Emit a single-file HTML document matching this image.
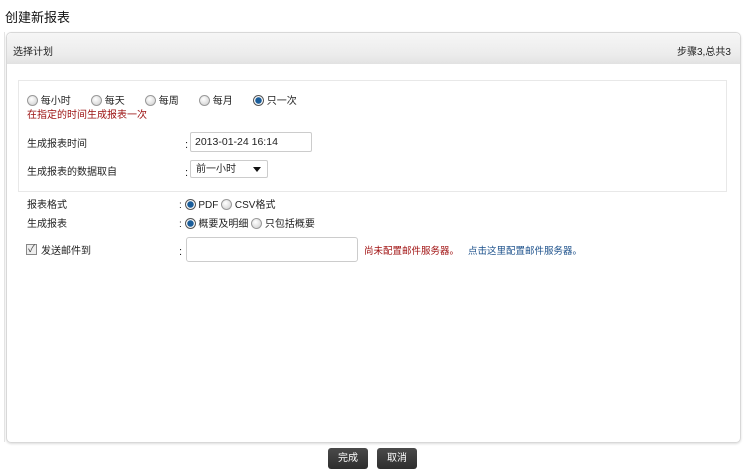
<!DOCTYPE html>
<html><head><meta charset="utf-8"><style>
*{margin:0;padding:0;box-sizing:border-box}
body{width:746px;height:475px;background:#fff;font-family:"Liberation Sans","Noto Sans CJK SC",sans-serif;font-size:11px;color:#222;position:relative;overflow:hidden}
.a{position:absolute;white-space:nowrap;line-height:12px}
.title{left:5px;top:11px;font-size:13px;color:#111;line-height:14px}
.panel{left:6px;top:32px;width:735px;height:411px;border:1px solid #d8d8d8;border-radius:5px;box-shadow:0 1px 2px #ddd}
.hdr{left:7px;top:33px;width:733px;height:31px;background:linear-gradient(#f6f6f6,#ececec 70%,#e2e2e2);border-radius:5px 5px 0 0}
.inner{left:18px;top:80px;width:709px;height:112px;border:1px solid #e8e8e8}
.rad{display:inline-block;width:11px;height:11px;border-radius:50%;border:1px solid #999;background:radial-gradient(circle at 40% 35%,#fff,#ccc);vertical-align:-2px}
.rad.on{background:radial-gradient(circle,#1a5d9a 0 3px,#fff 3.5px,#ddd);border-color:#555}
.inp{border:1px solid #ccc;border-radius:2px;background:#fff}
.btn{top:448px;height:21px;width:40px;background:linear-gradient(#4a4a4a,#2e2e2e);border-radius:3px;color:#fff;text-align:center;line-height:21px;font-size:10px}
</style></head><body>
<div class="a title">创建新报表</div>
<div class="a" style="left:4px;top:32px;width:1px;height:410px;background:#e4e4e4"></div>
<div class="a panel"></div>
<div class="a hdr"></div>
<div class="a" style="left:13px;top:47px;font-size:10px">选择计划</div>
<div class="a" style="left:677px;top:47px;font-size:10px">步骤3,总共3</div>
<div class="a inner"></div>
<div class="a" style="left:27px;top:95px;font-size:10px"><span class="rad"></span> 每小时</div>
<div class="a" style="left:91px;top:95px;font-size:10px"><span class="rad"></span> 每天</div>
<div class="a" style="left:145px;top:95px;font-size:10px"><span class="rad"></span> 每周</div>
<div class="a" style="left:199px;top:95px;font-size:10px"><span class="rad"></span> 每月</div>
<div class="a" style="left:253px;top:95px;font-size:10px"><span class="rad on"></span> 只一次</div>
<div class="a" style="left:27px;top:110px;font-size:10px;color:#9b1010">在指定的时间生成报表一次</div>
<div class="a" style="left:27px;top:139px;font-size:10px">生成报表时间</div>
<div class="a" style="left:185px;top:139px">:</div>
<div class="a inp" style="left:190px;top:132px;width:122px;height:20px;padding:3px 4px;font-size:10.5px">2013-01-24 16:14</div>
<div class="a" style="left:27px;top:167px;font-size:10px">生成报表的数据取自</div>
<div class="a" style="left:185px;top:167px">:</div>
<div class="a inp" style="left:190px;top:160px;width:78px;height:18px;padding:3px 5px;font-size:10px">前一小时<span style="position:absolute;right:6px;top:6px;border:4px solid transparent;border-top:5px solid #111"></span></div>
<div class="a" style="left:27px;top:200px;font-size:10px">报表格式</div>
<div class="a" style="left:179px;top:199px;font-size:10px">: <span class="rad on"></span> PDF <span class="rad"></span> CSV格式</div>
<div class="a" style="left:27px;top:219px;font-size:10px">生成报表</div>
<div class="a" style="left:179px;top:218px;font-size:10px">: <span class="rad on"></span> 概要及明细 <span class="rad"></span> 只包括概要</div>
<div class="a" style="left:26px;top:244px;width:11px;height:11px;border:1px solid #888;background:#eee;font-size:10px;line-height:9px;text-align:center;color:#444">✓</div>
<div class="a" style="left:41px;top:246px;font-size:10px">发送邮件到</div>
<div class="a" style="left:179px;top:246px">:</div>
<div class="a inp" style="left:186px;top:237px;width:172px;height:25px;border-radius:3px"></div>
<div class="a" style="left:364px;top:246px;font-size:9.5px;color:#a01010">尚未配置邮件服务器。</div>
<div class="a" style="left:468px;top:246px;font-size:9.5px;color:#1a4f8a">点击这里配置邮件服务器。</div>
<div class="a btn" style="left:328px">完成</div>
<div class="a btn" style="left:377px">取消</div>
</body></html>
